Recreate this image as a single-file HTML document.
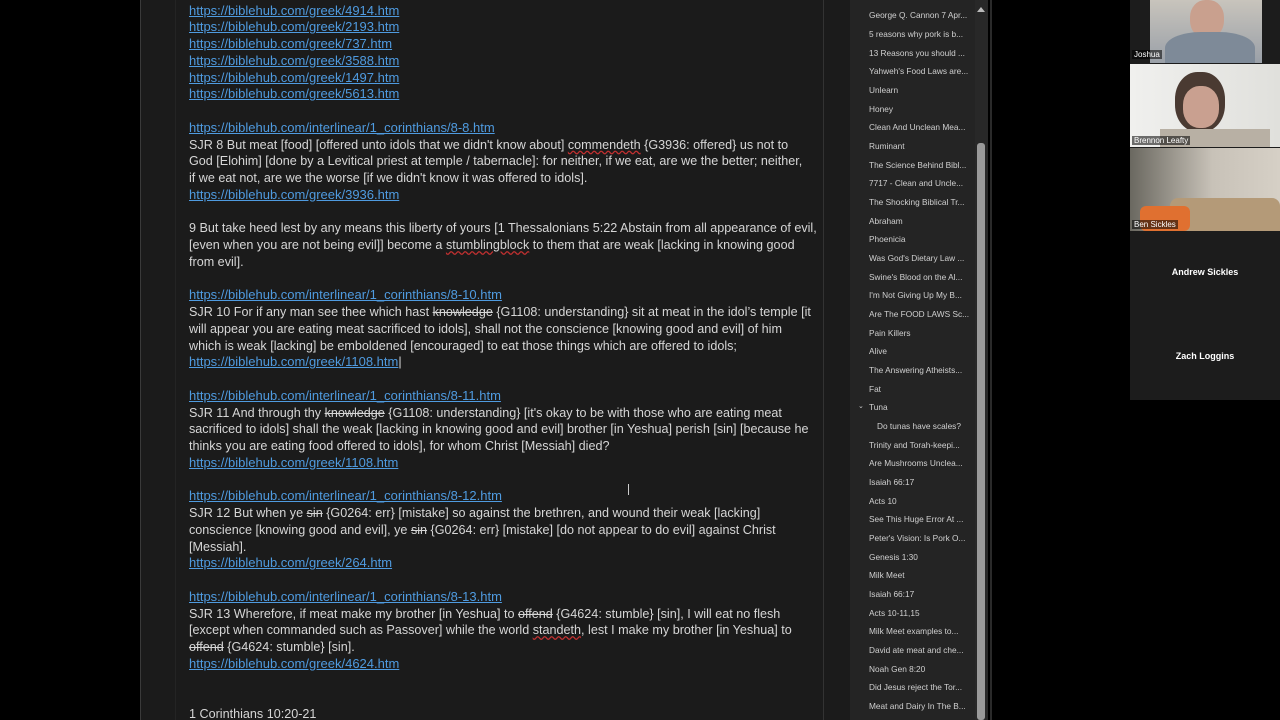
<!DOCTYPE html>
<html><head><meta charset="utf-8"><style>
*{margin:0;padding:0;box-sizing:border-box}
html,body{width:1280px;height:720px;overflow:hidden}
body{background:#000;position:relative;font-family:"Liberation Sans",sans-serif}
.doc{position:absolute;left:140px;top:0;width:710px;height:720px;background:#1b1b1b;border-left:1px solid #3a3a3a}
.docin{position:absolute;left:175px;top:0;width:649px;height:720px;border-right:1px solid #333;border-left:1px solid #242424}
.txt{position:absolute;left:189px;top:2.6px;font-size:12.6px;line-height:16.75px;color:#d6d6d6;white-space:nowrap}
.txt div{height:16.75px}
a{color:#4f9be0;text-decoration:underline;font-size:13px}
s{text-decoration:line-through}
.sq{text-decoration:underline wavy #c03030}
.nav{position:absolute;left:850px;top:0;width:125px;height:720px;background:#242424}
.nav div{position:absolute;left:19px;font-size:8.3px;color:#d0d0d0;white-space:nowrap}
.sb{position:absolute;left:975px;top:0;width:13px;height:720px;background:#282828}
.thumb{position:absolute;left:977px;top:143px;width:8px;height:577px;background:#9a9a9a;border-radius:3px}
.vid{position:absolute;left:1130px;top:0;width:150px;height:400px;background:#1c1c1c}
.tile{position:absolute;overflow:hidden}
.lbl{position:absolute;left:2px;bottom:2px;font-size:8px;color:#fff;background:rgba(0,0,0,.55);padding:0 2px}
.nm{position:absolute;width:150px;text-align:center;font-size:9px;font-weight:bold;color:#fff}
</style></head><body>
<div class="doc"></div>
<div class="docin"></div>
<div class="txt">
<div><a>https://biblehub.com/greek/4914.htm</a></div>
<div><a>https://biblehub.com/greek/2193.htm</a></div>
<div><a>https://biblehub.com/greek/737.htm</a></div>
<div><a>https://biblehub.com/greek/3588.htm</a></div>
<div><a>https://biblehub.com/greek/1497.htm</a></div>
<div><a>https://biblehub.com/greek/5613.htm</a></div>
<div></div>
<div><a>https://biblehub.com/interlinear/1_corinthians/8-8.htm</a></div>
<div>SJR 8 But meat [food] [offered unto idols that we didn't know about] <s class="sq">commendeth</s> {G3936: offered} us not to</div>
<div>God [Elohim] [done by a Levitical priest at temple / tabernacle]: for neither, if we eat, are we the better; neither,</div>
<div>if we eat not, are we the worse [if we didn't know it was offered to idols].</div>
<div><a>https://biblehub.com/greek/3936.htm</a></div>
<div></div>
<div>9 But take heed lest by any means this liberty of yours [1 Thessalonians 5:22 Abstain from all appearance of evil,</div>
<div>[even when you are not being evil]] become a <span class="sq">stumblingblock</span> to them that are weak [lacking in knowing good</div>
<div>from evil].</div>
<div></div>
<div><a>https://biblehub.com/interlinear/1_corinthians/8-10.htm</a></div>
<div>SJR 10 For if any man see thee which hast <s>knowledge</s> {G1108: understanding} sit at meat in the idol’s temple [it</div>
<div>will appear you are eating meat sacrificed to idols], shall not the conscience [knowing good and evil] of him</div>
<div>which is weak [lacking] be emboldened [encouraged] to eat those things which are offered to idols;</div>
<div><a>https://biblehub.com/greek/1108.htm</a>|</div>
<div></div>
<div><a>https://biblehub.com/interlinear/1_corinthians/8-11.htm</a></div>
<div>SJR 11 And through thy <s>knowledge</s> {G1108: understanding} [it's okay to be with those who are eating meat</div>
<div>sacrificed to idols] shall the weak [lacking in knowing good and evil] brother [in Yeshua] perish [sin] [because he</div>
<div>thinks you are eating food offered to idols], for whom Christ [Messiah] died?</div>
<div><a>https://biblehub.com/greek/1108.htm</a></div>
<div></div>
<div><a>https://biblehub.com/interlinear/1_corinthians/8-12.htm</a></div>
<div>SJR 12 But when ye <s>sin</s> {G0264: err} [mistake] so against the brethren, and wound their weak [lacking]</div>
<div>conscience [knowing good and evil], ye <s>sin</s> {G0264: err} [mistake] [do not appear to do evil] against Christ</div>
<div>[Messiah].</div>
<div><a>https://biblehub.com/greek/264.htm</a></div>
<div></div>
<div><a>https://biblehub.com/interlinear/1_corinthians/8-13.htm</a></div>
<div>SJR 13 Wherefore, if meat make my brother [in Yeshua] to <s>offend</s> {G4624: stumble} [sin], I will eat no flesh</div>
<div>[except when commanded such as Passover] while the world <span class="sq">standeth</span>, lest I make my brother [in Yeshua] to</div>
<div><s>offend</s> {G4624: stumble} [sin].</div>
<div><a>https://biblehub.com/greek/4624.htm</a></div>
<div></div>
<div></div>
<div>1 Corinthians 10:20-21</div>
</div>
<div class="nav">
<div style="top:10px">George Q. Cannon 7 Apr...</div>
<div style="top:29px">5 reasons why pork is b...</div>
<div style="top:48px">13 Reasons you should ...</div>
<div style="top:66px">Yahweh's Food Laws are...</div>
<div style="top:85px">Unlearn</div>
<div style="top:104px">Honey</div>
<div style="top:122px">Clean And Unclean Mea...</div>
<div style="top:141px">Ruminant</div>
<div style="top:160px">The Science Behind Bibl...</div>
<div style="top:178px">7717 - Clean and Uncle...</div>
<div style="top:197px">The Shocking Biblical Tr...</div>
<div style="top:216px">Abraham</div>
<div style="top:234px">Phoenicia</div>
<div style="top:253px">Was God's Dietary Law ...</div>
<div style="top:272px">Swine's Blood on the Al...</div>
<div style="top:290px">I'm Not Giving Up My B...</div>
<div style="top:309px">Are The FOOD LAWS Sc...</div>
<div style="top:328px">Pain Killers</div>
<div style="top:346px">Alive</div>
<div style="top:365px">The Answering Atheists...</div>
<div style="top:384px">Fat</div>
<div style="top:402px"><span style="position:absolute;left:-11px;font-size:7px">⌄</span>Tuna</div>
<div style="top:421px;left:27px">Do tunas have scales?</div>
<div style="top:440px">Trinity and Torah-keepi...</div>
<div style="top:458px">Are Mushrooms Unclea...</div>
<div style="top:477px">Isaiah 66:17</div>
<div style="top:496px">Acts 10</div>
<div style="top:514px">See This Huge Error At ...</div>
<div style="top:533px">Peter's Vision: Is Pork O...</div>
<div style="top:552px">Genesis 1:30</div>
<div style="top:570px">Milk Meet</div>
<div style="top:589px">Isaiah 66:17</div>
<div style="top:608px">Acts 10-11,15</div>
<div style="top:626px">Milk Meet examples to...</div>
<div style="top:645px">David ate meat and che...</div>
<div style="top:664px">Noah Gen 8:20</div>
<div style="top:682px">Did Jesus reject the Tor...</div>
<div style="top:701px">Meat and Dairy In The B...</div>
</div>
<div class="sb"></div>
<div style="position:absolute;left:977px;top:7px;width:0;height:0;border-left:4px solid transparent;border-right:4px solid transparent;border-bottom:5px solid #bbb"></div>
<div class="thumb"></div>
<div style="position:absolute;left:990px;top:0;width:2px;height:720px;background:#2a2a2a"></div>
<div class="vid">
<div class="tile" style="left:0;top:0;width:150px;height:63px;background:#1c1c1c"></div>
<div class="tile" style="left:20px;top:0;width:112px;height:63px;background:linear-gradient(#c8c4bc,#9aa0a8)">
<div style="position:absolute;left:40px;top:0;width:34px;height:38px;border-radius:45%;background:#c9a08e"></div>
<div style="position:absolute;left:15px;top:32px;width:90px;height:40px;border-radius:40% 40% 0 0;background:#7e8a98"></div>
</div>
<div class="lbl" style="left:2px;top:50px;bottom:auto">Joshua</div>
<div class="tile" style="left:0;top:64px;width:150px;height:83px;background:linear-gradient(90deg,#f0f0ee,#e0e0dc)">
<div style="position:absolute;left:45px;top:8px;width:50px;height:60px;border-radius:45%;background:#4a3a32"></div>
<div style="position:absolute;left:53px;top:22px;width:36px;height:42px;border-radius:45%;background:#c9a090"></div>
<div style="position:absolute;left:30px;top:65px;width:110px;height:30px;background:#b8b0a4"></div>
<div class="lbl">Brennon Leafty</div></div>
<div class="tile" style="left:0;top:148px;width:150px;height:83px;background:linear-gradient(90deg,#6a6860,#c8c2b8 55%,#d6d0c6)">
<div style="position:absolute;left:40px;top:50px;width:110px;height:33px;background:#b49a78;border-radius:8px 8px 0 0"></div>
<div style="position:absolute;left:10px;top:58px;width:50px;height:25px;background:#e07030;border-radius:6px"></div>
<div class="lbl">Ben Sickles</div></div>
<div class="nm" style="top:267px">Andrew Sickles</div>
<div class="nm" style="top:351px">Zach Loggins</div>
</div>
<div style="position:absolute;left:628px;top:484px;width:1px;height:11px;background:#ccc"></div>
</body></html>
